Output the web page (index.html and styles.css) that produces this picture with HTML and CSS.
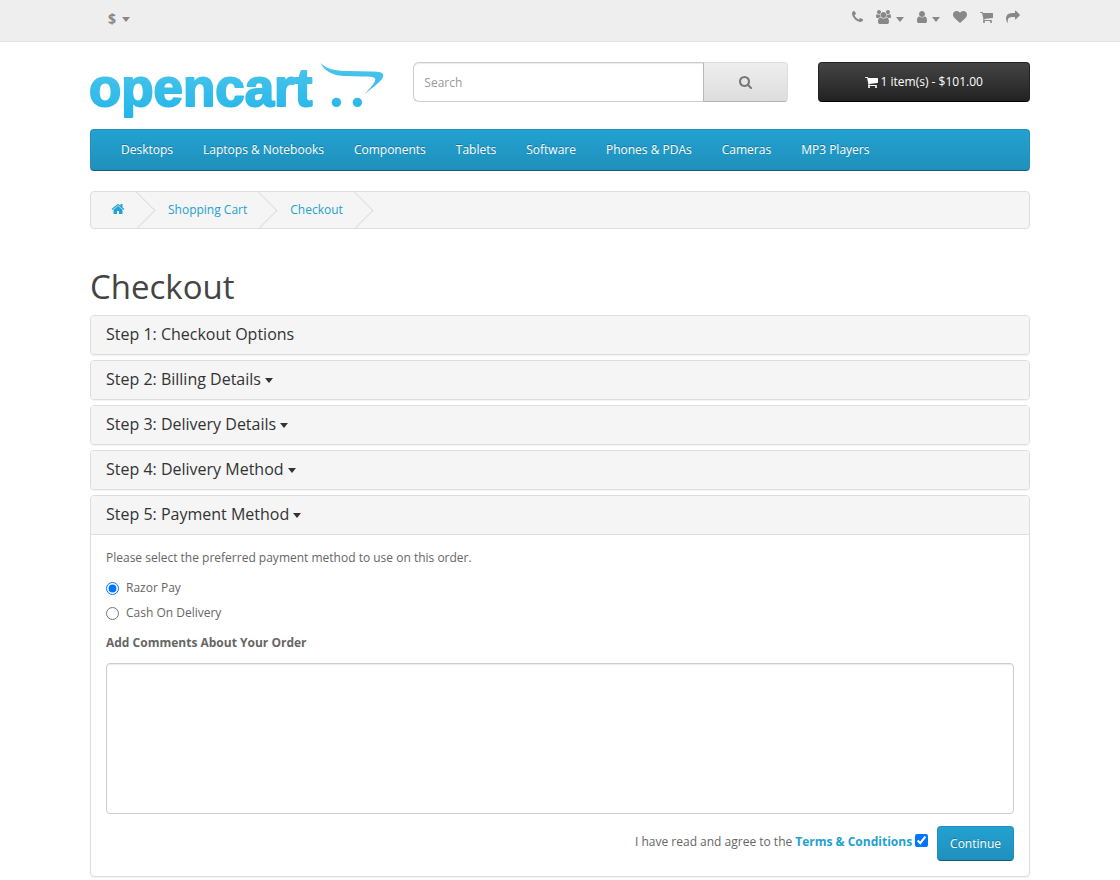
FILE: index.html
```
<!DOCTYPE html>
<html lang="en">
<head>
  <meta charset="UTF-8">
  <meta name="viewport" content="width=device-width, initial-scale=1">
  <title>Checkout</title>
  <link rel="stylesheet" href="styles.css">
</head>
<body>
  <!-- shared icons -->
  <svg class="sprite" aria-hidden="true">
    <symbol id="icon-cart" viewBox="64 0 1664 1792"><path d="M704 1536q0 52-38 90t-90 38-90-38-38-90 38-90 90-38 90 38 38 90zm896 0q0 52-38 90t-90 38-90-38-38-90 38-90 90-38 90 38 38 90zm128-1088v512q0 24-16.500 42.500t-40.500 21.500l-1044 122q13 60 13 70 0 16-24 64h920q26 0 45 19t19 45-19 45-45 19h-1024q-26 0-45-19t-19-45q0-11 8-31.500t16-36 21.500-40 15.500-29.500l-177-823h-204q-26 0-45-19t-19-45 19-45 45-19h256q16 0 28.500 6.500t19.500 15.500 13 24.500 8 26 5.500 29.500 4.500 26h1201q26 0 45 19t19 45z"/></symbol>
  </svg>

  <nav id="top">
    <div class="container top-row">
      <button type="button" class="btn-link currency"><strong>$</strong><span class="caret"></span></button>
      <ul class="top-links">
        <li><a href="#" aria-label="Phone"><svg class="icon w11" viewBox="192 0 1408 1792"><path d="M1600 1240q0 27-10 70.500t-21 68.500q-21 50-122 106-94 51-186 51-27 0-52.500-3.500t-57.500-12.500-47.500-14.500-55.500-20.500-49-18q-98-35-175-83-128-79-264.500-215.500t-215.500-264.500q-48-77-83-175-3-9-18-49t-20.500-55.500-14.500-47.500-12.500-57.500-3.500-52.500q0-92 51-186 56-101 106-122 25-11 68.500-21t70.500-10q14 0 21 3 18 6 53 76 11 19 30 54t35 63.500 31 53.500q3 4 17.500 25t21.500 35.500 7 28.500q0 20-28.500 50t-62 55-62 53-28.500 46q0 9 5 22.500t8.500 20.500 14 24 11.500 19q76 137 174 235t235 174q2 1 19 11.500t24 14 20.500 8.500 22.500 5q18 0 46-28.500t53-62 55-62 50-28.500q14 0 28.500 7t35.500 21.500 25 17.500q25 15 53.500 31t63.500 35 54 30q70 35 76 53 3 7 3 21z"/></svg></a></li>
        <li><a href="#" aria-label="Affiliates"><svg class="icon w15" viewBox="-64 0 1920 1792"><path d="M529 896q-162 5-265 128h-134q-82 0-138-40.500t-56-118.500q0-353 124-353 6 0 43.500 21t97.500 42.500 119 21.500q67 0 133-23-5 37-5 66 0 139 81 256zm1071 637q0 120-73 189.500t-194 69.500h-874q-121 0-194-69.500t-73-189.500q0-53 3.500-103.500t14-109 26.500-108.500 43-97.500 62-81 85.500-53.500 111.500-20q10 0 43 21.500t73 48 107 48 135 21.500 135-21.500 107-48 73-48 43-21.500q61 0 111.500 20t85.500 53.500 62 81 43 97.500 26.500 108.500 14 109 3.500 103.500zm-1024-1277q0 106-75 181t-181 75-181-75-75-181 75-181 181-75 181 75 75 181zm704 384q0 159-112.500 271.500t-271.500 112.500-271.500-112.500-112.500-271.500 112.500-271.500 271.500-112.500 271.500 112.500 112.500 271.500zm576 225q0 78-56 118.500t-138 40.500h-134q-103-123-265-128 81-117 81-256 0-29-5-66 66 23 133 23 59 0 119-21.500t97.500-42.500 43.500-21q124 0 124 353zm-128-609q0 106-75 181t-181 75-181-75-75-181 75-181 181-75 181 75 75 181z"/></svg><span class="caret"></span></a></li>
        <li><a href="#" aria-label="My Account"><svg class="icon w10" viewBox="256 0 1280 1792"><path d="M1536 1399q0 109-62.500 187t-150.500 78h-854q-88 0-150.500-78t-62.500-187q0-85 8.500-160.500t31.500-152 58.500-131 94-89 134.500-34.500q131 128 313 128t313-128q76 0 134.500 34.500t94 89 58.500 131 31.500 152 8.500 160.500zm-256-887q0 159-112.500 271.500t-271.500 112.500-271.500-112.500-112.500-271.500 112.500-271.500 271.500-112.500 271.500 112.500 112.500 271.500z"/></svg><span class="caret"></span></a></li>
        <li><a href="#" aria-label="Wish List"><svg class="icon w14" viewBox="0 0 1792 1792"><path d="M896 1664q-26 0-44-18l-624-602q-10-8-27.500-26t-55.500-65.500-68-97.500-53.500-121-23.500-138q0-220 127-344t351-124q62 0 126.500 21.500t120 58 95.500 68.500 76 68q36-36 76-68t95.500-68.500 120-58 126.500-21.500q224 0 351 124t127 344q0 221-229 450l-623 600q-18 18-44 18z"/></svg></a></li>
        <li><a href="#" aria-label="Shopping Cart"><svg class="icon w13"><use href="#icon-cart"/></svg></a></li>
        <li><a href="#" aria-label="Checkout"><svg class="icon w14" viewBox="0 0 1792 1792"><path d="M1792 640q0 26-19 45l-512 512q-19 19-45 19t-45-19-19-45v-256h-224q-98 0-175.500 6t-154 21.500-133 42.500-105.500 69.500-80 101-48.500 138.500-17.500 181q0 55 5 123 0 6 2.500 23.500t2.500 26.500q0 15-8.500 25t-23.500 10q-16 0-28-17-7-9-13-22t-13.500-30-10.500-24q-127-285-127-451 0-199 53-333 162-403 875-403h224v-256q0-26 19-45t45-19 45 19l512 512q19 19 19 45z"/></svg></a></li>
      </ul>
    </div>
  </nav>

  <header class="container">
    <div class="row">
      <div class="col">
        <a href="#" class="logo" aria-label="opencart">
          <svg viewBox="0 0 294 58">
            <defs>
              <linearGradient id="logo-fill" gradientUnits="userSpaceOnUse" x1="0" y1="0" x2="0" y2="58">
                <stop offset="0" stop-color="#4cc6ea"/>
                <stop offset="1" stop-color="#21b5ea"/>
              </linearGradient>
            </defs>
            <text class="logo-text" x="-1" y="44">opencart</text>
            <path fill="url(#logo-fill)" d="M231 1C237 7 246 9 258 9L282 9.500C290 9.500 294 10.500 294 13.500C294 18 285 24 275 32.500C280 27 286 21 286 17.500C286 15 282 14.500 273 14.500L254 14C242 13 235 9 231 1Z"/>
            <circle fill="url(#logo-fill)" cx="247" cy="40.500" r="4.700"/>
            <circle fill="url(#logo-fill)" cx="268" cy="40.500" r="4.700"/>
          </svg>
        </a>
      </div>
      <div class="col">
        <form class="search">
          <input type="text" name="search" placeholder="Search" aria-label="Search">
          <button type="button" class="btn btn-default" aria-label="Search"><svg class="icon search-icon" viewBox="64 128 1664 1664"><path d="M1216 832q0-185-131.500-316.500t-316.500-131.500-316.500 131.500-131.500 316.500 131.500 316.500 316.500 131.500 316.500-131.500 131.500-316.500zm512 832q0 52-38 90t-90 38q-54 0-90-38l-343-342q-179 124-399 124-143 0-273.500-55.500t-225-150-150-225-55.500-273.500 55.500-273.500 150-225 225-150 273.500-55.500 273.500 55.500 225 150 150 225 55.500 273.500q0 220-124 399l343 343q37 37 37 90z"/></svg></button>
        </form>
      </div>
      <div class="col">
        <button type="button" class="btn btn-inverse"><svg class="icon w13"><use href="#icon-cart"/></svg>1 item(s) - $101.00</button>
      </div>
    </div>
  </header>

  <div class="container">
    <nav id="menu">
      <a href="#">Desktops</a>
      <a href="#">Laptops &amp; Notebooks</a>
      <a href="#">Components</a>
      <a href="#">Tablets</a>
      <a href="#">Software</a>
      <a href="#">Phones &amp; PDAs</a>
      <a href="#">Cameras</a>
      <a href="#">MP3 Players</a>
    </nav>
  </div>

  <main class="container">
    <ul class="breadcrumb">
      <li><a href="#" aria-label="Home"><svg class="icon w14" viewBox="0 0 1792 1792"><path d="M1472 992v480q0 26-19 45t-45 19h-384v-384h-256v384h-384q-26 0-45-19t-19-45v-480q0-1 .5-3t.5-3l575-474 575 474q1 2 1 6zm223-69l-62 74q-8 9-21 11h-3q-13 0-21-7l-692-577-692 577q-12 8-24 7-13-2-21-11l-62-74q-8-10-7-23.500t11-21.500l719-599q32-26 76-26t76 26l244 204v-195q0-14 9-23t23-9h192q14 0 23 9t9 23v408l219 182q10 8 11 21.500t-7 23.500z"/></svg></a></li>
      <li><a href="#">Shopping Cart</a></li>
      <li><a href="#">Checkout</a></li>
    </ul>

    <h1>Checkout</h1>

    <div class="panel-group">
      <section class="panel">
        <h4 class="panel-heading">Step 1: Checkout Options</h4>
      </section>
      <section class="panel">
        <h4 class="panel-heading"><a href="#">Step 2: Billing Details <span class="caret"></span></a></h4>
      </section>
      <section class="panel">
        <h4 class="panel-heading"><a href="#">Step 3: Delivery Details <span class="caret"></span></a></h4>
      </section>
      <section class="panel">
        <h4 class="panel-heading"><a href="#">Step 4: Delivery Method <span class="caret"></span></a></h4>
      </section>
      <section class="panel">
        <h4 class="panel-heading"><a href="#">Step 5: Payment Method <span class="caret"></span></a></h4>
        <form class="panel-body">
          <p>Please select the preferred payment method to use on this order.</p>
          <label class="radio"><input type="radio" name="payment_method" value="razorpay" checked>Razor Pay</label>
          <label class="radio"><input type="radio" name="payment_method" value="cod">Cash On Delivery</label>
          <label class="comment-label" for="comment">Add Comments About Your Order</label>
          <textarea id="comment" name="comment"></textarea>
          <div class="buttons">
            <span class="agree">
              <label for="agree">I have read and agree to the</label>
              <a href="#">Terms &amp; Conditions</a>
              <input type="checkbox" id="agree" name="agree" checked>
            </span>
            <button type="button" class="btn btn-primary">Continue</button>
          </div>
        </form>
      </section>
    </div>
  </main>
</body>
</html>
```
FILE: styles.css
```
* {
  box-sizing: border-box;
}
body {
  margin: 0;
  font-family: "Open Sans", sans-serif;
  font-size: 12px;
  line-height: 20px;
  color: #666;
  background: #fff;
}
a {
  color: #23a1d1;
  text-decoration: none;
}
ul {
  list-style: none;
  margin: 0;
  padding: 0;
}
button, input, textarea {
  font: inherit;
}
.sprite {
  display: none;
}
.container {
  max-width: 970px;
  margin: 0 auto;
  padding: 0 15px;
}
.icon {
  height: 14px;
  fill: currentColor;
  flex: none;
}
.w10 { width: 10px; }
.w11 { width: 11px; }
.w13 { width: 13px; }
.w14 { width: 14px; }
.w15 { width: 15px; }
.caret {
  display: inline-block;
  border-top: 5px solid;
  border-left: 4px solid transparent;
  border-right: 4px solid transparent;
  vertical-align: middle;
}

/* top bar */
#top {
  background: #eee;
  border-bottom: 1px solid #e2e2e2;
  height: 42px;
  margin-bottom: 20px;
}
.top-row {
  display: flex;
  justify-content: space-between;
  align-items: flex-start;
}
.btn-link {
  display: flex;
  align-items: center;
  gap: 6px;
  border: none;
  background: none;
  color: #888;
  padding: 9px 18px;
  cursor: pointer;
}
.currency strong {
  font-size: 14px;
}
.top-links {
  display: flex;
  gap: 13px;
  padding: 10px 10px 0 0;
}
.top-links a {
  display: flex;
  align-items: center;
  gap: 5px;
  color: #888;
}
.top-links .caret {
  margin-top: 4px;
}

/* header */
.row {
  display: grid;
  grid-template-columns: 4fr 5fr 3fr;
  margin: 0 -15px;
}
.col {
  padding: 0 15px;
  min-width: 0;
}
.logo, .logo svg {
  display: block;
  width: 100%;
}
.logo svg {
  overflow: visible;
}
.logo-text {
  font-family: "Liberation Sans", sans-serif;
  font-size: 53px;
  font-weight: bold;
  fill: url(#logo-fill);
  stroke: url(#logo-fill);
  stroke-width: 2px;
  stroke-linejoin: round;
}
.search {
  display: flex;
}
.search input {
  flex: 1;
  min-width: 0;
  height: 40px;
  padding: 0 10px;
  border: 1px solid #ccc;
  border-right: none;
  border-radius: 6px 0 0 6px;
  box-shadow: inset 0 1px 1px rgba(0, 0, 0, 0.08);
  color: #555;
}
.search input::placeholder {
  color: #999;
}
.btn {
  display: flex;
  align-items: center;
  justify-content: center;
  border: 1px solid;
  border-radius: 4px;
  cursor: pointer;
}
.btn-default {
  width: 85px;
  height: 40px;
  color: #777;
  background: linear-gradient(#eee, #ddd);
  border-color: #ddd #ddd #b3b3b3 #b7b7b7;
  border-radius: 0 4px 4px 0;
}
.search-icon {
  width: 13px;
  height: 13px;
}
.btn-inverse {
  width: 100%;
  height: 40px;
  gap: 3px;
  color: #fff;
  background: linear-gradient(#444, #222);
  border-color: #222 #222 #000;
}

/* main menu */
#menu {
  display: flex;
  flex-wrap: wrap;
  margin: 9px 0 20px;
  padding: 0 15px;
  background: linear-gradient(#23a1d1, #1f90bb);
  border: 1px solid;
  border-color: #1f90bb #1f90bb #145e7a;
  border-radius: 4px;
}
#menu a {
  padding: 10px 15px;
  color: #fff;
  text-shadow: 0 -1px 0 rgba(0, 0, 0, 0.25);
}

.breadcrumb {
  display: flex;
  gap: 3px;
  height: 38px;
  overflow: hidden;
  background: #f5f5f5;
  border: 1px solid #ddd;
  border-radius: 4px;
}
.breadcrumb li {
  position: relative;
  padding: 8px 20px;
}
.breadcrumb a {
  display: flex;
  align-items: center;
  min-height: 18px;
}
/* chevron between the crumbs */
.breadcrumb li::after {
  content: "";
  position: absolute;
  top: 5px;
  right: -5px;
  width: 26px;
  height: 26px;
  border-right: 1px solid #ddd;
  border-bottom: 1px solid #ddd;
  transform: rotate(-45deg);
}

h1 {
  margin: 40px 0 10px;
  font-size: 33px;
  font-weight: 400;
  line-height: 36px;
  color: #444;
}

/* checkout steps */
.panel {
  margin-bottom: 5px;
  border: 1px solid #ddd;
  border-radius: 4px;
  box-shadow: 0 1px 1px rgba(0, 0, 0, 0.05);
}
.panel-heading {
  margin: 0;
  padding: 9px 15px 11px;
  font-size: 16px;
  font-weight: 400;
  line-height: 18px;
  color: #333;
  background: #f5f5f5;
  border-radius: 3px;
}
.panel-heading a {
  color: inherit;
}
.panel-body {
  padding: 13px 15px 15px;
  border-top: 1px solid #ddd;
}
.panel-body p {
  margin: 0 0 10px;
}
.radio {
  display: flex;
  align-items: center;
  width: fit-content;
  margin-bottom: 5px;
}
.radio input {
  width: 13px;
  height: 13px;
  margin: 2px 7px 0 0;
}
.comment-label {
  display: block;
  margin: 10px 0;
  font-weight: bold;
}
textarea {
  display: block;
  width: 100%;
  height: 151px;
  padding: 8px 10px;
  color: #555;
  border: 1px solid #ccc;
  border-radius: 4px;
  box-shadow: inset 0 1px 1px rgba(0, 0, 0, 0.08);
  resize: none;
}
.buttons {
  display: flex;
  justify-content: flex-end;
  gap: 9px;
  margin-top: 12px;
}
.agree {
  display: flex;
  align-items: center;
  gap: 3px;
  height: 32px;
}
.agree a {
  font-weight: bold;
}
.agree input {
  width: 13px;
  height: 13px;
  margin: 0 0 2px;
}
.btn-primary {
  height: 35px;
  padding: 1px 12px 0;
  color: #fff;
  background: linear-gradient(#23a1d1, #1f90bb);
  border-color: #1f90bb #1f90bb #145e7a;
  text-shadow: 0 -1px 0 rgba(0, 0, 0, 0.25);
}
```
